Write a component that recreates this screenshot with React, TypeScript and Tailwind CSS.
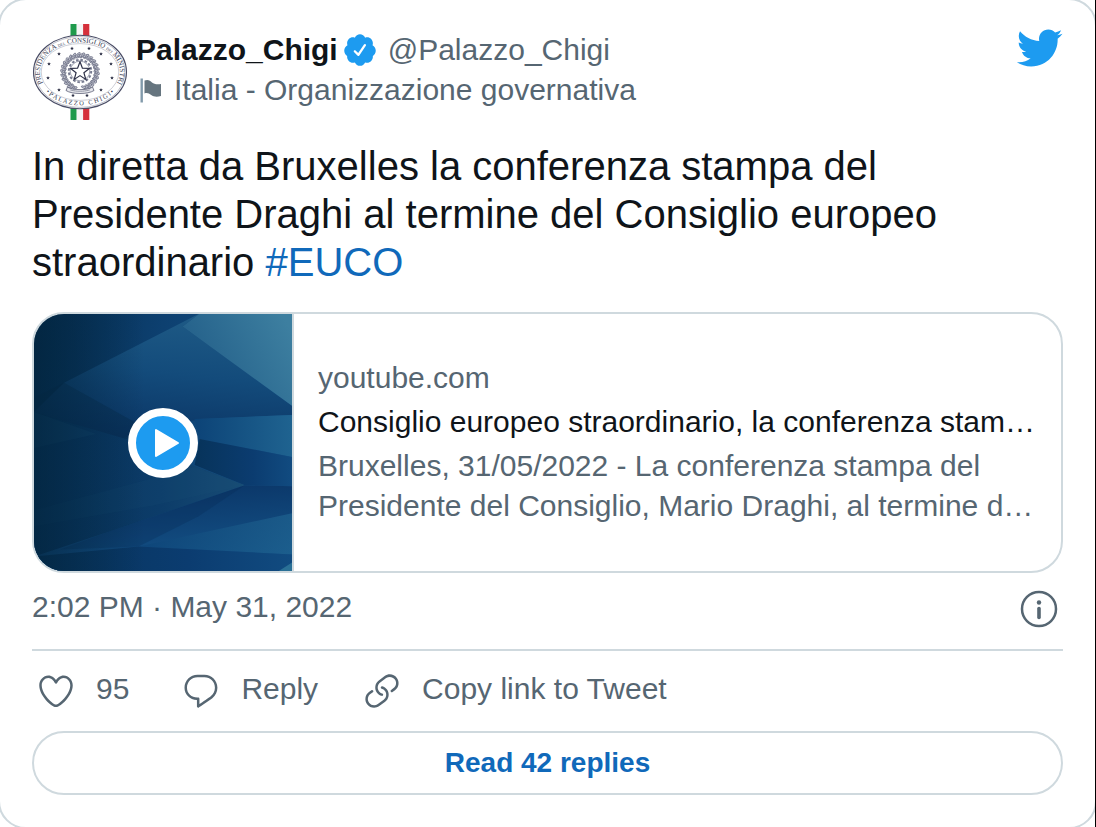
import type { ReactNode } from "react";

const tweet = {
  name: "Palazzo_Chigi",
  handle: "@Palazzo_Chigi",
  label: "Italia - Organizzazione governativa",
  text: "In diretta da Bruxelles la conferenza stampa del Presidente Draghi al termine del Consiglio europeo straordinario",
  hashtag: "#EUCO",
  date: "2:02 PM · May 31, 2022",
  likes: 95,
  replies: 42,
  link: {
    domain: "youtube.com",
    title: "Consiglio europeo straordinario, la conferenza stampa del Presidente Draghi",
    description:
      "Bruxelles, 31/05/2022 - La conferenza stampa del Presidente del Consiglio, Mario Draghi, al termine del Consiglio europeo straordinario",
  },
};

const ICONS = {
  bird: "M23.643 4.937c-.835.37-1.732.62-2.675.733.962-.576 1.7-1.49 2.048-2.578-.9.534-1.897.922-2.958 1.13-.85-.904-2.06-1.47-3.4-1.47-2.572 0-4.658 2.086-4.658 4.66 0 .364.042.718.12 1.06-3.873-.195-7.304-2.05-9.602-4.868-.4.69-.63 1.49-.63 2.342 0 1.616.823 3.043 2.072 3.878-.764-.025-1.482-.234-2.11-.583v.06c0 2.257 1.605 4.14 3.737 4.568-.392.106-.803.162-1.227.162-.3 0-.593-.028-.877-.082.593 1.85 2.313 3.198 4.352 3.234-1.595 1.25-3.604 1.995-5.786 1.995-.376 0-.747-.022-1.112-.065 2.062 1.323 4.51 2.093 7.14 2.093 8.57 0 13.255-7.098 13.255-13.254 0-.2-.005-.402-.014-.602.91-.658 1.7-1.477 2.323-2.41z",
  verified:
    "M22.5 12.5c0-1.58-.875-2.95-2.148-3.6.154-.435.238-.905.238-1.4 0-2.21-1.71-3.998-3.818-3.998-.47 0-.92.084-1.336.25C14.818 2.415 13.51 1.5 12 1.5s-2.816.917-3.437 2.25c-.415-.165-.866-.25-1.336-.25-2.11 0-3.818 1.79-3.818 4 0 .494.083.964.237 1.4-1.272.65-2.147 2.018-2.147 3.6 0 1.495.782 2.798 1.942 3.486-.02.17-.032.34-.032.514 0 2.21 1.708 4 3.818 4 .47 0 .92-.086 1.335-.25.62 1.334 1.926 2.25 3.437 2.25 1.512 0 2.818-.916 3.437-2.25.415.163.865.248 1.336.248 2.11 0 3.818-1.79 3.818-4 0-.174-.012-.344-.033-.513 1.158-.687 1.943-1.99 1.943-3.484zm-6.616-3.334l-4.334 6.5c-.145.217-.382.334-.625.334-.143 0-.288-.04-.416-.126l-.115-.094-2.415-2.415c-.293-.293-.293-.768 0-1.06s.768-.294 1.06 0l1.77 1.767 3.825-5.74c.23-.345.696-.436 1.04-.207.346.23.44.696.21 1.04z",
  heart:
    "M12 21.638h-.014C9.403 21.59 1.95 14.856 1.95 8.478c0-3.064 2.525-5.754 5.403-5.754 2.29 0 3.83 1.58 4.646 2.73.814-1.148 2.354-2.73 4.645-2.73 2.88 0 5.404 2.69 5.404 5.755 0 6.376-7.454 13.11-10.037 13.157H12zM7.354 4.225c-2.08 0-3.903 1.988-3.903 4.255 0 5.74 7.034 11.596 8.55 11.658 1.518-.062 8.55-5.917 8.55-11.658 0-2.267-1.823-4.255-3.903-4.255-2.528 0-3.94 2.936-3.952 2.965-.23.562-1.156.562-1.387 0-.014-.03-1.425-2.965-3.954-2.965z",
  reply:
    "M14.046 2.242l-4.148-.01h-.002c-4.374 0-7.8 3.427-7.8 7.802 0 4.098 3.186 7.206 7.465 7.37v3.828c0 .108.044.286.12.403.142.225.384.347.632.347.138 0 .277-.038.402-.118.264-.168 6.473-4.14 8.088-5.506 1.902-1.61 3.04-3.97 3.043-6.312v-.017c-.006-4.367-3.43-7.787-7.8-7.788zm3.787 12.972c-1.134.96-4.862 3.405-6.772 4.643V16.67c0-.414-.335-.75-.75-.75h-.396c-3.66 0-6.318-2.476-6.318-5.886 0-3.534 2.768-6.302 6.3-6.302l4.147.01h.002c3.532 0 6.3 2.766 6.302 6.296-.003 1.91-.942 3.844-2.514 5.176z",
  link: "M11.96 14.945c-.067 0-.136-.01-.203-.027-1.13-.318-2.097-.986-2.795-1.932-.832-1.125-1.176-2.508-.968-3.893s.942-2.605 2.068-3.438l3.53-2.608c2.322-1.716 5.61-1.224 7.33 1.1.83 1.127 1.175 2.51.967 3.895s-.943 2.605-2.07 3.438l-1.48 1.094c-.333.246-.804.175-1.05-.158-.246-.334-.176-.804.158-1.05l1.48-1.095c.803-.592 1.327-1.463 1.476-2.45.148-.988-.098-1.975-.69-2.778-1.225-1.656-3.572-2.01-5.23-.784l-3.53 2.608c-.802.593-1.326 1.464-1.475 2.45-.15.99.097 1.975.69 2.778.498.675 1.187 1.15 1.992 1.377.4.114.633.528.52.928-.092.33-.394.547-.722.547zM7.27 22.054c-1.61 0-3.197-.735-4.225-2.125-.832-1.127-1.176-2.51-.968-3.894s.943-2.605 2.07-3.438l1.478-1.094c.334-.245.805-.175 1.05.158s.177.804-.157 1.05l-1.48 1.095c-.803.593-1.326 1.464-1.475 2.45-.148.99.097 1.975.69 2.778 1.225 1.657 3.57 2.01 5.23.785l3.528-2.608c1.658-1.225 2.01-3.57.785-5.23-.498-.674-1.187-1.15-1.992-1.376-.4-.113-.633-.527-.52-.927.112-.4.528-.63.926-.522 1.13.318 2.096.986 2.794 1.932 1.717 2.324 1.224 5.612-1.1 7.33l-3.53 2.608c-.933.693-2.023 1.026-3.105 1.026z",
};

function Icon({ d, className }: { d: string; className: string }) {
  return (
    <svg viewBox="0 0 24 24" fill="currentColor" className={`shrink-0 ${className}`} aria-hidden="true">
      <path d={d} />
    </svg>
  );
}

function starPoints(cx: number, cy: number, r: number, inner = 0.4) {
  return Array.from({ length: 10 }, (_, i) => {
    const a = (Math.PI / 5) * i - Math.PI / 2;
    const len = i % 2 ? r * inner : r;
    return `${(cx + Math.cos(a) * len).toFixed(2)},${(cy + Math.sin(a) * len).toFixed(2)}`;
  }).join(" ");
}

const SEAL_STARS = [
  [27, 30], [40, 24.5], [57, 24.5], [69, 30], [17, 40], [79, 40],
  [16, 54], [80, 54], [27, 66], [69, 66], [41, 71.5], [55, 71.5],
];

// leaves of the wreath, laid along both branches
const LEAVES = Array.from({ length: 24 }, (_, i) => -160 + i * 13.9);

function Seal() {
  return (
    <svg viewBox="0 0 96 96" className="size-24 shrink-0" role="img" aria-label="Palazzo Chigi">
      <defs>
        <path id="seal-top" d="M12.1 61A40 29.500 0 1 1 83.900 61" />
        <path id="seal-bottom" d="M6.300 56A43 33.500 0 0 0 89.700 56" />
      </defs>
      <rect x="38.5" width="6.2" height="96" fill="#1f9a4c" />
      <rect x="44.7" width="6.4" height="96" fill="#f5f5f5" />
      <rect x="51.1" width="6.2" height="96" fill="#d5303b" />
      <ellipse cx="48" cy="48" rx="46.5" ry="36.8" fill="#fff" stroke="#4a4d66" strokeWidth="1.1" />
      <ellipse cx="48" cy="48" rx="45" ry="35.4" fill="none" stroke="#85889b" strokeWidth="0.5" />
      <ellipse cx="48" cy="48" rx="38.8" ry="28.4" fill="none" stroke="#9a9dad" strokeWidth="0.5" />
      <g fill="#34374f" fontFamily="Liberation Serif, serif">
        <text fontSize="7">
          <textPath href="#seal-top" startOffset="50%" textAnchor="middle">
            PRESIDENZA <tspan fontSize="4">DEL</tspan> CONSIGLIO <tspan fontSize="4">DEI</tspan> MINISTRI
          </textPath>
        </text>
        <text fontSize="6.5">
          <textPath href="#seal-bottom" startOffset="50%" textAnchor="middle">
            {"•\u00a0P A L A Z Z O\u00a0\u00a0 C H I G I\u00a0•"}
          </textPath>
        </text>
      </g>
      {SEAL_STARS.map(([x, y]) => (
        <polygon key={`${x}-${y}`} points={starPoints(x, y, 2)} fill="#23263d" />
      ))}
      <g fill="#c3c5d0" stroke="#666a80" strokeWidth="0.7">
        {LEAVES.map((a) => (
          <g key={a} transform={`translate(48 48) rotate(${a}) translate(0 -17.2)`}>
            <ellipse rx="1.2" ry="3.2" transform="rotate(52)" />
            <ellipse cy="2.4" rx="1" ry="2.600" transform="rotate(-48)" />
          </g>
        ))}
      </g>
      <circle cx="48" cy="47" r="12.4" fill="#fff" />
      <circle cx="48" cy="47" r="11.2" fill="none" stroke="#777b90" strokeWidth="2" strokeDasharray="2.6 1.8" />
      <circle cx="48" cy="47" r="9.8" fill="#fff" stroke="#777b90" strokeWidth="0.7" />
      <polygon points={starPoints(48, 47.5, 9.8, 0.42)} fill="#fff" stroke="#2e3148" strokeWidth="1.2" />
      <path d="M35.500 63c4 3.500 21 3.500 25 0l1.500 3.500c-6 4-22 4-28 0z" fill="#e6e7ec" stroke="#5a5d73" strokeWidth="0.8" />
      <path d="M38.500 66c6 1.700 13 1.700 19 0" fill="none" stroke="#5a5d73" strokeWidth="0.9" strokeDasharray="1.200 0.800" />
    </svg>
  );
}

function Thumbnail() {
  return (
    <svg viewBox="0 0 257 257" preserveAspectRatio="xMidYMid slice" className="block size-full" aria-hidden="true">
      <defs>
        <linearGradient id="base" x2="1" y2="0.1">
          <stop offset="0" stopColor="#052d50" />
          <stop offset="0.5" stopColor="#0d4070" />
          <stop offset="1" stopColor="#155388" />
        </linearGradient>
        <linearGradient id="corner" x1="0.1" y1="0.6" x2="1" y2="0.2">
          <stop offset="0" stopColor="#235f89" />
          <stop offset="1" stopColor="#3d7fa0" />
        </linearGradient>
        <linearGradient id="band" x1="0.7" y1="0" x2="0.5" y2="1">
          <stop offset="0" stopColor="#1f5b86" />
          <stop offset="0.5" stopColor="#134b7b" />
          <stop offset="1" stopColor="#0b3565" />
        </linearGradient>
        <linearGradient id="fade" x2="1">
          <stop offset="0" stopColor="#0c4377" />
          <stop offset="1" stopColor="#1f6390" />
        </linearGradient>
        <linearGradient id="blade" x2="1">
          <stop offset="0" stopColor="#07325a" />
          <stop offset="0.6" stopColor="#0c3c69" />
          <stop offset="1" stopColor="#184c75" />
        </linearGradient>
        <linearGradient id="shade" x2="1">
          <stop offset="0" stopColor="#07335a" />
          <stop offset="0.6" stopColor="#0b3c70" />
          <stop offset="1" stopColor="#114b80" />
        </linearGradient>
        <linearGradient id="low" x1="0.35" y1="0.1" x2="0.6" y2="1">
          <stop offset="0" stopColor="#0b3769" />
          <stop offset="1" stopColor="#15558a" />
        </linearGradient>
        <linearGradient id="left" x2="1">
          <stop offset="0" stopColor="#02243c" stopOpacity="0.7" />
          <stop offset="1" stopColor="#02243c" stopOpacity="0" />
        </linearGradient>
      </defs>
      <path d="M0 0h257v257H0z" fill="url(#base)" />
      <path d="M165 0L30 69 0 98l88 26 78-19 91-4V92L148 13z" fill="url(#band)" />
      <path d="M30 69L0 84v16l88 26 30-8z" fill="#052746" opacity="0.35" />
      <path d="M165 0h92v92L148 13z" fill="url(#corner)" />
      <path d="M160 105l97-4v42l-92-18z" fill="url(#fade)" />
      <path d="M165 125l92 18v29l-47-1-50-20z" fill="url(#shade)" />
      <path d="M0 98l88 26 122 47L76 217 0 242z" fill="url(#blade)" />
      <path d="M0 98l62 22L0 134z" fill="#1d5277" opacity="0.25" />
      <path d="M210 171L76 217 0 242v15h257v-85z" fill="url(#low)" />
      <path d="M210 171L76 217l-50 18 78-3 60-30z" fill="#062a56" opacity="0.3" />
      <path d="M257 199L104 232l153 8z" fill="url(#fade)" opacity="0.7" />
      <path d="M104 232L0 242v15h257v-17z" fill="url(#shade)" />
      <path d="M210 171L120 191 0 212v-16l160-43z" fill="#1d5277" opacity="0.14" />
      <path d="M257 248l-14 9h14z" fill="#2a7096" />
      <path d="M0 0h110v257H0z" fill="url(#left)" />
    </svg>
  );
}

function Action({ icon, children, className = "" }: { icon: string; children: ReactNode; className?: string }) {
  return (
    <button type="button" className={`flex items-start gap-5 leading-9 hover:underline ${className}`}>
      <Icon d={icon} className="size-10" />
      {children}
    </button>
  );
}

export default function App() {
  return (
    <div className="overflow-hidden border-r border-black bg-white font-['Liberation_Sans',Arial,sans-serif] text-[30px] leading-10 text-[#566672]">
      <article className="-m-0.5 rounded-[28px] border-2 border-[#cfd9de] px-8 pt-6 pb-8">
        {/* Author */}
        <header className="flex items-start gap-2">
          <Seal />
          <div className="min-w-0 flex-1 pt-1.5">
            <div className="flex items-center">
              <a href="#profile" className="font-bold text-[#0f1419]">{tweet.name}</a>
              <Icon d={ICONS.verified} className="mr-2.5 ml-1 size-9 text-[#1d9bf0]" />
              <a href="#profile">{tweet.handle}</a>
            </div>
            <div className="flex items-center gap-3">
              <svg viewBox="0 0 26 28" className="h-7 w-[26px] shrink-0" aria-hidden="true">
                <path d="M5.700 2.500v24" stroke="#829aab" strokeWidth="2.400" />
                <path d="M8.500 4.500c3.500-1.500 5.500 0 7.500 2 2 1.900 5.500 2 9 1.500v12c-4 1.200-7.500.8-9.800-1-2.200-1.800-4.400-2.500-6.700-1.500z" fill="#66757f" />
              </svg>
              <span>{tweet.label}</span>
            </div>
          </div>
          <a href="#tweet" aria-label="View on Twitter">
            <Icon d={ICONS.bird} className="size-12 text-[#1d9bf0]" />
          </a>
        </header>

        <p className="mt-[22px] text-[40px] leading-12 text-[#0f1419]">
          {tweet.text} <a href="#euco" className="text-[#1069ba]">{tweet.hashtag}</a>
        </p>

        {/* Link preview */}
        <a href="#video" className="mt-[26px] flex overflow-hidden rounded-[32px] border-2 border-[#cfd9de]">
          <div className="relative h-[257px] w-[258px] shrink-0">
            <Thumbnail />
            <div className="absolute inset-0 flex items-center justify-center">
              <div className="flex size-[70px] items-center justify-center rounded-full border-8 border-white bg-[#1d9bf0]">
                <svg viewBox="0 0 54 54" className="size-full" aria-hidden="true">
                  <path d="M20 14v26L42 27z" fill="#fff" stroke="#fff" strokeWidth="2" strokeLinejoin="round" />
                </svg>
              </div>
            </div>
          </div>
          <div className="flex min-w-0 flex-1 flex-col justify-center gap-1 border-l-2 border-[#cfd9de] px-6 pb-0.5">
            <div>{tweet.link.domain}</div>
            <div className="truncate text-[#0f1419]">{tweet.link.title}</div>
            <div className="line-clamp-2">{tweet.link.description}</div>
          </div>
        </a>

        <div className="mt-3.5 flex items-start justify-between">
          <a href="#tweet"><time dateTime="2022-05-31T14:02">{tweet.date}</time></a>
          <button type="button" aria-label="Twitter Ads info and privacy" className="mr-0.5">
            <svg viewBox="0 0 44 44" className="size-11" fill="none" stroke="currentColor" aria-hidden="true">
              <circle cx="22" cy="22" r="17" strokeWidth="2.500" />
              <path d="M22 21.500v9" strokeWidth="3.600" strokeLinecap="round" />
              <circle cx="22" cy="15.500" r="2.200" fill="currentColor" stroke="none" />
            </svg>
          </button>
        </div>

        {/* Actions */}
        <div className="mt-[18px] flex gap-11 border-t-2 border-[#cfd9de] px-1 pt-5">
          <Action icon={ICONS.heart} className="pr-2">{tweet.likes}</Action>
          <Action icon={ICONS.reply}>Reply</Action>
          <Action icon={ICONS.link}>Copy link to Tweet</Action>
        </div>

        <button
          type="button"
          className="mt-5 h-16 w-full rounded-full border-2 border-[#cfd9de] text-[28px] font-bold text-[#1069ba] hover:bg-blue-50"
        >
          Read {tweet.replies} replies
        </button>
      </article>
    </div>
  );
}
